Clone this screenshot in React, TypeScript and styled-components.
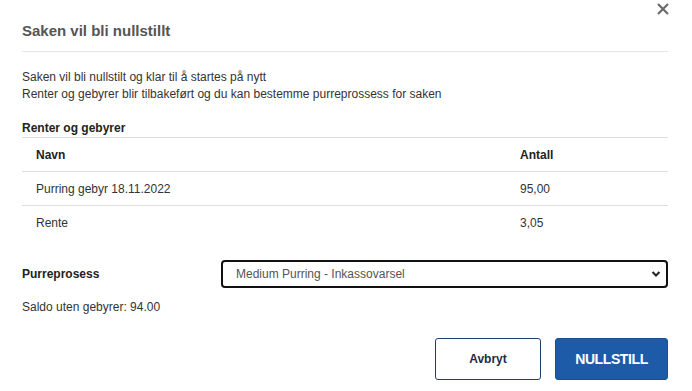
import React from "react";
import styled, { createGlobalStyle } from "styled-components";

const Global = createGlobalStyle`
  html, body { margin: 0; padding: 0; background: #fff; }
  body { font-family: "Liberation Sans", Arial, sans-serif; color: #333; }
  * { box-sizing: border-box; }
`;

const Dialog = styled.div`
  position: relative;
  width: 692px;
  height: 391px;
  padding: 0 24px 0 22px;
  display: flex;
  flex-direction: column;
`;

const Close = styled.button`
  position: absolute;
  top: 0;
  right: 20px;
  width: 18px;
  height: 18px;
  border: none;
  background: none;
  padding: 0;
  cursor: pointer;
  display: flex;
  align-items: center;
  justify-content: center;
`;

const Title = styled.h2`
  margin: 0;
  height: 52px;
  padding-top: 22px;
  font-size: 15px;
  font-weight: 700;
  color: #555;
  border-bottom: 1px solid #e6e6e6;
`;

const Intro = styled.div`
  padding-top: 17px;
  font-size: 12px;
  line-height: 17px;
  color: #333;
`;

const SectionLabel = styled.div`
  margin-top: 17px;
  font-size: 12px;
  font-weight: 700;
  color: #222;
  height: 17px;
  line-height: 17px;
  border-bottom: 1px solid #ddd;
  box-sizing: content-box;
`;

const Table = styled.div`
  display: flex;
  flex-direction: column;
`;

const Row = styled.div<{ $last?: boolean; $head?: boolean }>`
  display: grid;
  grid-template-columns: 484px 1fr;
  padding-left: 14px;
  height: 34px;
  align-items: center;
  font-size: 12px;
  font-weight: ${(p) => (p.$head ? 700 : 400)};
  color: ${(p) => (p.$head ? "#222" : "#333")};
  border-bottom: ${(p) => (p.$last ? "none" : "1px solid #ddd")};
`;

const Field = styled.div`
  margin-top: 20px;
  display: grid;
  grid-template-columns: 199px 1fr;
  align-items: center;
`;

const Label = styled.label`
  font-size: 12px;
  font-weight: 700;
  color: #222;
`;

const SelectWrap = styled.div`
  position: relative;
  height: 28px;
  border: 2px solid #111;
  border-radius: 4px;
  display: flex;
  align-items: center;
  padding-left: 13px;
  font-size: 12px;
  color: #555;
`;

const Chevron = styled.svg`
  position: absolute;
  right: 5px;
  top: 8px;
`;

const Saldo = styled.div`
  margin-top: 12px;
  font-size: 12px;
  color: #333;
`;

const Actions = styled.div`
  margin-top: 24px;
  display: flex;
  justify-content: flex-end;
  gap: 14px;
`;

const Button = styled.button<{ $primary?: boolean }>`
  height: 42px;
  border-radius: 3px;
  font-family: inherit;
  font-weight: 700;
  cursor: pointer;
  ${(p) =>
    p.$primary
      ? `
    width: 113px;
    background: #1d5aa8;
    border: 1px solid #1a4f94;
    color: #fff;
    font-size: 14px;
    letter-spacing: -0.4px;
  `
      : `
    width: 106px;
    background: #fff;
    border: 1px solid #23406b;
    color: #1c2c44;
    font-size: 12px;
  `}
`;

export default function App() {
  return (
    <>
      <Global />
      <Dialog>
        <Close aria-label="Lukk">
          <svg width="12" height="12" viewBox="0 0 12 12">
            <path d="M1 1 L11 11 M11 1 L1 11" stroke="#6b6b6b" strokeWidth="2.2" strokeLinecap="butt" />
          </svg>
        </Close>
        <Title>Saken vil bli nullstillt</Title>
        <Intro>
          Saken vil bli nullstilt og klar til å startes på nytt
          <br />
          Renter og gebyrer blir tilbakeført og du kan bestemme purreprossess for saken
        </Intro>
        <SectionLabel>Renter og gebyrer</SectionLabel>
        <Table>
          <Row $head>
            <span>Navn</span>
            <span>Antall</span>
          </Row>
          <Row>
            <span>Purring gebyr 18.11.2022</span>
            <span>95,00</span>
          </Row>
          <Row $last>
            <span>Rente</span>
            <span>3,05</span>
          </Row>
        </Table>
        <Field>
          <Label>Purreprosess</Label>
          <SelectWrap>
            Medium Purring - Inkassovarsel
            <Chevron width="10" height="8" viewBox="0 0 10 8">
              <path d="M1.5 2 L5 5.5 L8.5 2" fill="none" stroke="#222" strokeWidth="2" />
            </Chevron>
          </SelectWrap>
        </Field>
        <Saldo>Saldo uten gebyrer: 94.00</Saldo>
        <Actions>
          <Button>Avbryt</Button>
          <Button $primary>NULLSTILL</Button>
        </Actions>
      </Dialog>
    </>
  );
}
